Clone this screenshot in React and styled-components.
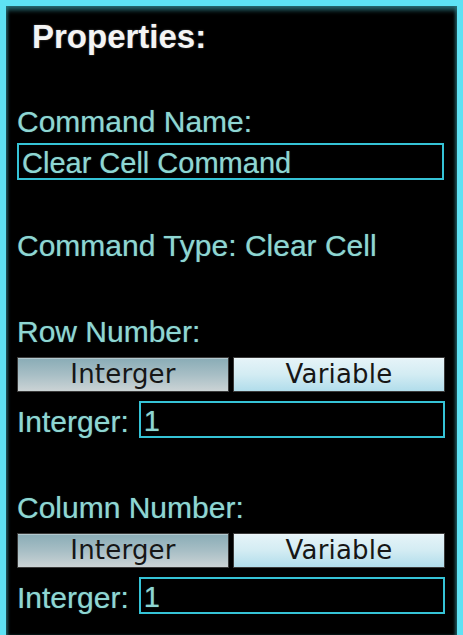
import { useState } from "react";
import styled, { createGlobalStyle } from "styled-components";

const GlobalStyle = createGlobalStyle`
    html, body {
        margin: 0;
        padding: 0;
        background: #000;
    }
    body {
        font-family: "Liberation Sans", Arial, sans-serif;
    }
`;

const Panel = styled.div`
    box-sizing: border-box;
    width: 463px;
    height: 100vh;
    min-height: 635px;
    background: #000;
    border: 6px solid #5ee2f4;
    border-bottom: none;
    box-shadow: inset 0 5px 5px -1px rgba(45, 120, 128, 0.85),
        inset 3px 0 3px -1px rgba(45, 120, 128, 0.6),
        inset -3px 0 3px -1px rgba(45, 120, 128, 0.6);
    padding: 13px 12px 0 11px;
    overflow: hidden;
`;

const Title = styled.h1`
    margin: 0 0 0 15px;
    font-size: 33px;
    line-height: 36px;
    font-weight: 700;
    color: #f4f4f4;
    text-shadow: 0 0 2px rgba(255, 255, 255, 0.35);
`;

const Label = styled.div`
    margin-top: ${(p) => p.$gap || 0}px;
    font-size: 30px;
    line-height: 34px;
    color: #8ed6d2;
    white-space: nowrap;
    text-shadow: 0 0 1px rgba(120, 220, 220, 0.6);
`;

const Field = styled.input`
    box-sizing: border-box;
    display: block;
    width: ${(p) => (p.$grow ? "auto" : "427px")};
    flex: ${(p) => (p.$grow ? "1" : "none")};
    min-width: 0;
    height: 37px;
    margin-top: ${(p) => p.$gap || 0}px;
    padding: 3px 3px 0;
    background: #000;
    border: 2px solid #35c3d6;
    font-family: "Liberation Sans", Arial, sans-serif;
    font-size: 29px;
    line-height: 30px;
    color: #8ed6d2;
    outline: none;
    text-shadow: 0 0 1px rgba(120, 220, 220, 0.6);
`;

const Toggle = styled.div`
    display: grid;
    grid-template-columns: 1fr 1fr;
    gap: 4px;
    margin-top: ${(p) => p.$gap || 0}px;
`;

const ToggleButton = styled.button`
    box-sizing: border-box;
    height: 35px;
    padding: 0;
    border: 1px solid #3a3a3a;
    font-family: "DejaVu Sans", Verdana, sans-serif;
    font-size: 26px;
    line-height: 33px;
    color: #161616;
    letter-spacing: 0.2px;
    cursor: pointer;
    background: ${(p) =>
        p.$active
            ? "linear-gradient(to bottom, #89acb6 0%, #a7bec5 50%, #cbd3d5 100%)"
            : "linear-gradient(to bottom, #e6f4f8 0%, #d3ecf3 50%, #b1ddeb 100%)"};
    box-shadow: inset 0 1px 0 rgba(255, 255, 255, 0.35);
`;

const InlineRow = styled.div`
    display: flex;
    align-items: flex-start;
    gap: 10px;
    margin-top: 9px;
    ${Label} {
        margin-top: 4px;
    }
`;

const NumberSetting = ({ title, gap }) => {
    const [mode, setMode] = useState("int");
    return (
        <>
            <Label $gap={gap}>{title}</Label>
            <Toggle $gap={8}>
                <ToggleButton $active={mode === "int"} onClick={() => setMode("int")}>Interger</ToggleButton>
                <ToggleButton $active={mode === "var"} onClick={() => setMode("var")}>Variable</ToggleButton>
            </Toggle>
            <InlineRow>
                <Label>Interger:</Label>
                <Field $grow defaultValue="1" />
            </InlineRow>
        </>
    );
};

const App = () => {
    return (
        <>
            <GlobalStyle />
            <Panel>
                <Title>Properties:</Title>
                <Label $gap={50}>Command Name:</Label>
                <Field $gap={4} defaultValue="Clear Cell Command" />
                <Label $gap={49}>Command Type: Clear Cell</Label>
                <NumberSetting title="Row Number:" gap={52} />
                <NumberSetting title="Column Number:" gap={52} />
            </Panel>
        </>
    );
};

export default App;
